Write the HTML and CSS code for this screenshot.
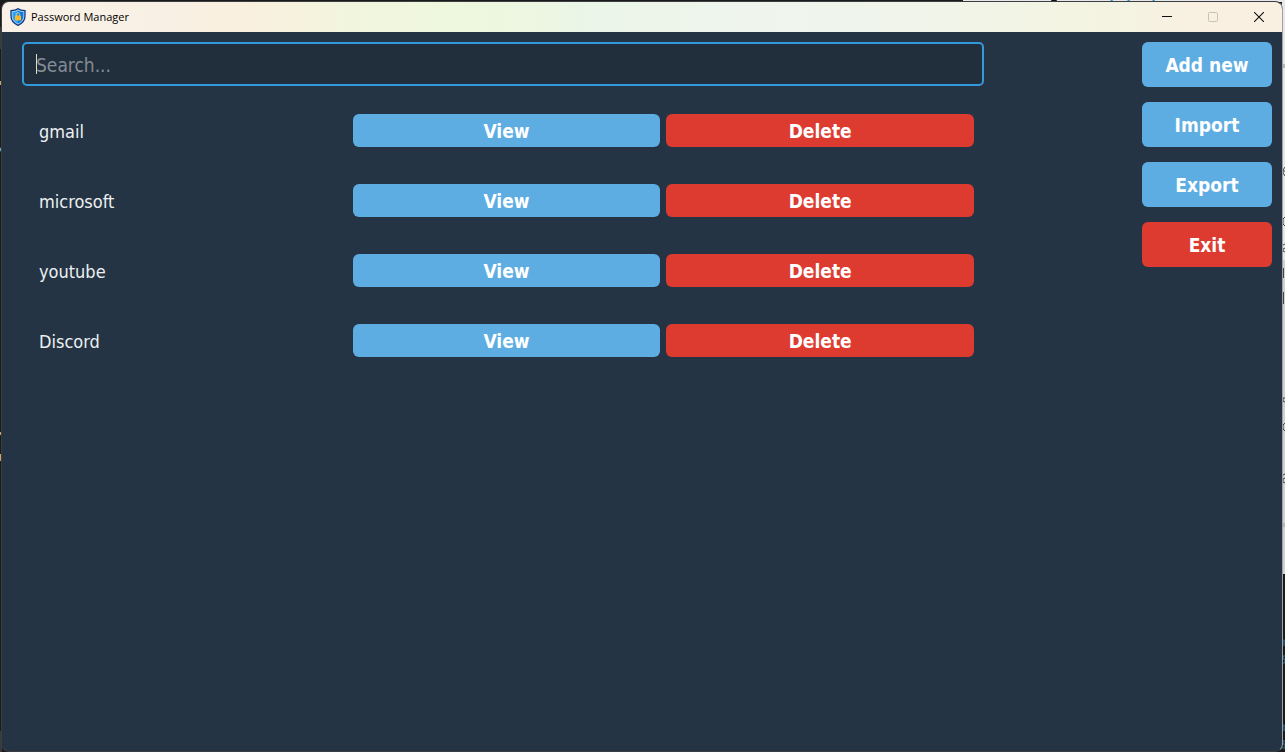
FILE: index.html
```html
<!DOCTYPE html>
<html lang="en">
<head>
<meta charset="utf-8">
<title>Password Manager</title>
<link rel="stylesheet" href="styles.css">
</head>
<body>
<div class="desktop" aria-hidden="true">
  <svg class="edge edge-left" width="2" height="752">
    <path fill="#3a3a3e" d="M0 27h2v22H0zM0 731h2v21H0z"/>
    <path fill="#c9a56a" d="M0 81h1v4H0zM0 432h1v3H0zM0 454h1v7H0z"/>
    <path fill="#79b8d8" d="M0 149l2-4v3l-2 4z"/>
  </svg>
  <svg class="edge edge-right" width="3" height="752">
    <path fill="#e8e8ea" d="M0 0h3v260H0z"/>
    <path fill="#d2d2d4" d="M0 260h3v314H0z"/>
    <path fill="#b8b8ba" d="M0 64h3v4H0zM0 523h3v4H0z"/>
    <path fill="none" stroke="#444" d="M3 167l-2 3v3l2 3M0 171h3M3 217l-2 2v5l2 2M1 245l2-1M3 248l-2 1v2l2 1M1.500 268v10M1.500 292v12M3 398h-2v3l2 1M3 423l-2 2v4l2 2M1 475l2-1M3 478l-2 1v3l2 1"/>
    <path fill="none" stroke="#25809c" d="M0 640h2v6M3 656H1v3h2v4H0M0 725h2v6M3 741H1v3h2v4H0"/>
  </svg>
  <svg class="edge edge-top" width="322" height="2">
    <path fill="#e8e8ea" d="M0 0h322v2H0z"/>
    <path fill="#111" d="M88 0h6l-1 2h-4z"/>
    <path fill="#3496be" d="M148 0h2l-1 2h-3zM165 0h2l-1 2h-3zM190 0h2l-1 2h-3z"/>
  </svg>
</div>
<div class="window">
  <header class="titlebar">
    <svg class="app-icon" width="16" height="18" viewBox="0 0 16 18" aria-hidden="true">
      <path d="M8 .7C6 2.200 3.500 2.600 1 2.600V8c0 4.500 2.800 7.400 7 9.300 4.200-1.900 7-4.800 7-9.300V2.600C12.500 2.600 10 2.200 8 .7z" fill="#9ccaf2" stroke="#123a80" stroke-width="1.300"/>
      <path d="M8 2.500C6.500 3.500 4.700 4 2.700 4.100V8c0 3.600 2 5.900 5.300 7.500z" fill="#20a6ff"/>
      <path d="M8 2.500c1.500 1 3.300 1.500 5.300 1.600V8c0 3.600-2 5.900-5.300 7.500z" fill="#087be8"/>
      <path d="M6.300 8V6.500a1.700 1.700 0 0 1 3.400 0V8" fill="none" stroke="#e5c77c"/>
      <rect x="5" y="7.500" width="6" height="5" rx="1" fill="#f9b62a"/>
    </svg>
    <h1 class="title">Password Manager</h1>
    <button class="caption" type="button" aria-label="Minimize"><svg width="10" height="10"><path d="M0 4.500h10" stroke="#111"/></svg></button>
    <button class="caption" type="button" aria-label="Maximize" disabled><svg width="10" height="10"><rect x=".5" y=".5" width="9" height="9" rx="1" fill="none" stroke="#c4c5b4"/></svg></button>
    <button class="caption" type="button" aria-label="Close"><svg width="10" height="10"><path d="M0 0l10 10M10 0L0 10" stroke="#111" stroke-width="1.100"/></svg></button>
  </header>
  <div class="content">
    <main class="vault">
      <div class="search-box">
        <input class="search" type="text" placeholder="Search..." aria-label="Search">
        <span class="caret"></span>
      </div>
      <ul class="entries">
        <li class="entry"><span class="name">gmail</span><button class="btn" type="button">View</button><button class="btn danger" type="button">Delete</button></li>
        <li class="entry"><span class="name">microsoft</span><button class="btn" type="button">View</button><button class="btn danger" type="button">Delete</button></li>
        <li class="entry"><span class="name">youtube</span><button class="btn" type="button">View</button><button class="btn danger" type="button">Delete</button></li>
        <li class="entry"><span class="name">Discord</span><button class="btn" type="button">View</button><button class="btn danger" type="button">Delete</button></li>
      </ul>
    </main>
    <nav class="actions" aria-label="Actions">
      <button class="btn large" type="button">Add new</button>
      <button class="btn large" type="button">Import</button>
      <button class="btn large" type="button">Export</button>
      <button class="btn large danger" type="button">Exit</button>
    </nav>
  </div>
</div>
</body>
</html>
```
FILE: styles.css
```css
* { box-sizing: border-box; }
body {
  margin: 0;
  min-height: 100vh;
  padding: 1px 2px 0 1px;
  display: flex;
  background: #1b1b1c;
  overflow: hidden;
  font-family: "DejaVu Sans Condensed", "DejaVu Sans", sans-serif;
}
.edge { position: absolute; top: 0; }
.edge-left { left: 0; }
.edge-right { right: 0; }
.edge-top { right: 0; }
.window {
  position: relative;
  flex: 1;
  display: flex;
  flex-direction: column;
  overflow: hidden;
  border: 1px solid #3a3d42;
  border-right-color: #9da3a9;
  border-radius: 8px;
  background: #243444;
}
.titlebar {
  display: flex;
  align-items: center;
  height: 30px;
  padding-left: 8px;
  background: linear-gradient(90deg, #f9f0e7 0%, #f9f0e5 13%, #f9f0de 19%, #f2f5de 27%, #eef8dd 35%, #ecf6e3 43%, #ebf5e8 46%, #eff5ed 58%, #f0f4eb 70%, #f3f4e2 83%, #f5f2e2 90%, #f9f0e2 93%, #f9f0e2 100%);
}
.title {
  flex: 1;
  margin: 0 0 0 5px;
  font: 400 11px/16px "Open Sans", "Noto Sans", sans-serif;
  color: #000;
}
.caption {
  display: flex;
  align-items: center;
  justify-content: center;
  width: 46px;
  height: 30px;
  padding: 0;
  border: 0;
  background: none;
}
.content {
  flex: 1;
  display: grid;
  grid-template-columns: 1fr 130px;
  gap: 158px;
  padding: 10px 10px 0 20px;
}
.search-box { position: relative; }
.search {
  display: block;
  width: 100%;
  height: 44px;
  padding: 2px 12px 0;
  border: 2px solid #3498db;
  border-radius: 5px;
  outline: 0;
  background: #212f3d;
  color: #ecf0f1;
  font: inherit;
  font-size: 19px;
}
.search::placeholder { color: #848c94; opacity: 1; }
.caret {
  position: absolute;
  left: 14px;
  top: 12px;
  width: 1px;
  height: 20px;
  background: #ecd9be;
}
.entries {
  display: grid;
  gap: 37px;
  margin: 0;
  padding: 28px 10px 0 17px;
  list-style: none;
}
.entry {
  display: grid;
  grid-template-columns: repeat(3, 1fr);
  align-items: center;
  gap: 6px;
}
.name { padding-top: 3px; color: #ecf0f1; font-size: 18px; line-height: 24px; }
.btn {
  height: 33px;
  padding: 0;
  border: 0;
  border-radius: 6px;
  background: #5dade2;
  color: #fff;
  font: inherit;
  font-size: 19px;
  font-weight: 700;
}
.danger { background: #de3b30; }
.actions { display: flex; flex-direction: column; gap: 15px; }
.large { height: 45px; }
```
